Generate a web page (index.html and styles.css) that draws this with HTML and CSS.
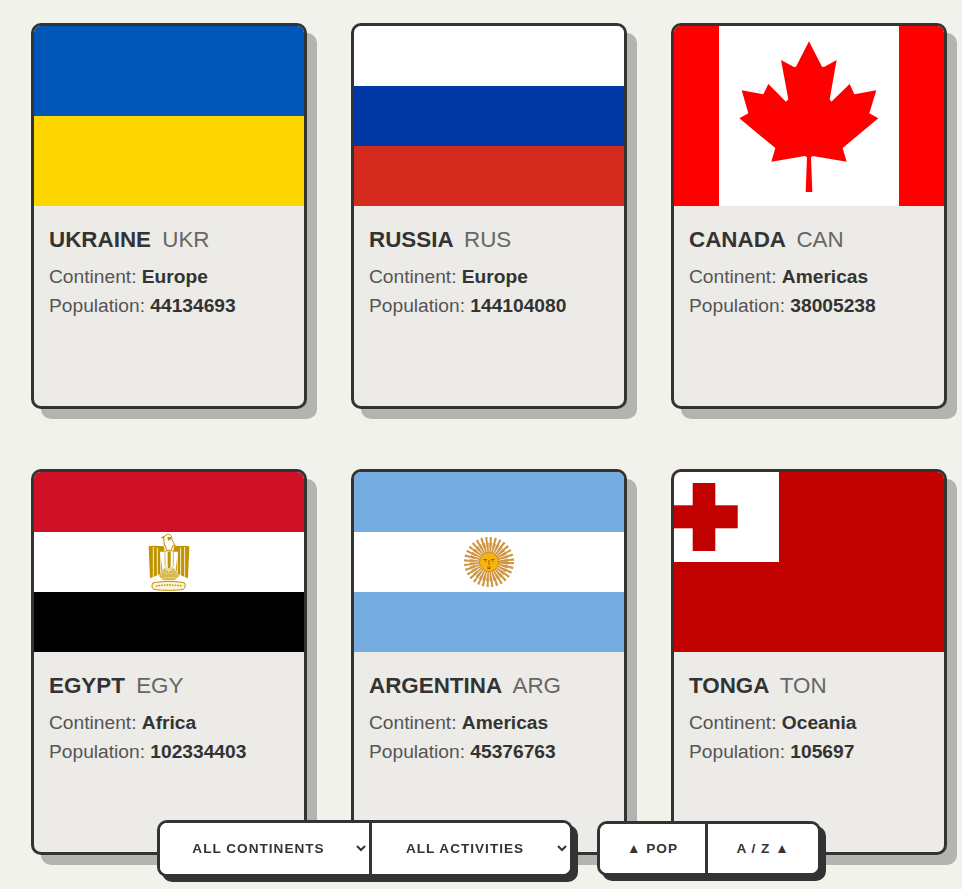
FILE: index.html
```html
<!DOCTYPE html>
<html lang="en">
<head>
<meta charset="utf-8">
<title>Countries</title>
<link rel="stylesheet" href="styles.css">
</head>
<body>
<main class="grid">
  <article class="card">
    <svg class="flag" viewBox="0 0 270 180"><rect width="270" height="90" fill="#0057b7"/><rect y="90" width="270" height="90" fill="#ffd700"/></svg>
    <div class="info">
      <h2 class="name">UKRAINE <span class="code">UKR</span></h2>
      <p class="row">Continent: <b>Europe</b></p>
      <p class="row">Population: <b>44134693</b></p>
    </div>
  </article>
  <article class="card">
    <svg class="flag" viewBox="0 0 270 180"><rect width="270" height="60" fill="#fff"/><rect y="60" width="270" height="60" fill="#0039a6"/><rect y="120" width="270" height="60" fill="#d52b1e"/></svg>
    <div class="info">
      <h2 class="name">RUSSIA <span class="code">RUS</span></h2>
      <p class="row">Continent: <b>Europe</b></p>
      <p class="row">Population: <b>144104080</b></p>
    </div>
  </article>
  <article class="card">
    <svg class="flag" viewBox="12 18 810 540"><rect x="12" y="18" width="810" height="540" fill="#f00"/><rect x="147" y="18" width="540" height="540" fill="#fff"/><polygon fill="#f00" points="417,64 456,140 462,141 500,120 479,238 484,245 539,192 553,223 619,211 598,280 625,295 518,384 530,425 428,408 423,412 427,516 407,516 411,412 405,408 304,425 316,384 208,295 235,280 215,211 280,223 295,192 348,245 355,238 333,120 372,141 378,140"/></svg>
    <div class="info">
      <h2 class="name">CANADA <span class="code">CAN</span></h2>
      <p class="row">Continent: <b>Americas</b></p>
      <p class="row">Population: <b>38005238</b></p>
    </div>
  </article>
  <article class="card">
    <svg class="flag" viewBox="0 0 810 540">
      <rect width="810" height="180" fill="#ce1126"/><rect y="180" width="810" height="180" fill="#fff"/><rect y="360" width="810" height="180" fill="#000"/>
      <g transform="translate(288 159)">
        <path fill="#fff" stroke="#c09300" stroke-width="3" d="M103 62L101 36L112 28C122 27 127 34 125 42L130 52L136 62L128 62L124 76H110L106 62Z"/>
        <path fill="#c09300" d="M102 32L92 38L102 41ZM112 36H124V42L114 48Z"/>
        <path fill="#c09300" d="M56 64L72 62L102 64L104 80L90 80L97 132L92 146L70 156L60 160Z"/>
        <path fill="#c09300" d="M178 64L162 62L132 64L130 80L144 80L137 132L142 146L164 156L174 160Z"/>
        <path stroke="#fff" stroke-width="2.500" fill="none" d="M70 66V158M82 68V152M92 82V146M164 66V158M152 68V152M142 82V146"/>
        <path fill="#fff" stroke="#c09300" stroke-width="2" d="M105 78H130V124L117 136L105 124Z"/>
        <path fill="#c09300" d="M113 80H122V126L117 132L113 126Z"/>
        <path fill="#d8b84a" d="M86 152L104 128L117 140L130 128L148 152L134 166H100Z"/>
        <path stroke="#fff" stroke-width="3" stroke-dasharray="3 5" fill="none" d="M94 150L110 134M140 150L124 134M100 158H134M108 146H126"/>
        <path fill="#fbf3d6" stroke="#c09300" stroke-width="3" d="M68 174C88 168 146 168 164 174C168 184 164 190 160 193C138 197 92 197 72 193C66 190 64 184 68 174Z"/>
        <path stroke="#c09300" stroke-width="4" stroke-dasharray="5 3" fill="none" d="M78 183C100 179 132 179 154 183"/>
      </g>
    </svg>
    <div class="info">
      <h2 class="name">EGYPT <span class="code">EGY</span></h2>
      <p class="row">Continent: <b>Africa</b></p>
      <p class="row">Population: <b>102334403</b></p>
    </div>
  </article>
  <article class="card">
    <svg class="flag" viewBox="0 0 270 180">
      <rect width="270" height="180" fill="#74acdf"/><rect y="60" width="270" height="60" fill="#fff"/>
      <circle cx="135" cy="90" r="14" fill="none" stroke="#cf9540" stroke-width="11" stroke-dasharray="2 .75"/>
      <circle cx="135" cy="90" r="20" fill="none" stroke="#cf9540" stroke-width="10" stroke-dasharray="1.9 2.03"/>
      <circle cx="135" cy="90" r="9.500" fill="#f6b40e" stroke="#c8841a" stroke-width=".8"/>
      <path fill="none" stroke="#85340a" stroke-width=".7" d="M129.500 87.500H133M137 87.500H140.500M130.500 89H132.500M137.500 89H139.500M135 88V93M133 95H137M133.500 96.500H136.500"/>
    </svg>
    <div class="info">
      <h2 class="name">ARGENTINA <span class="code">ARG</span></h2>
      <p class="row">Continent: <b>Americas</b></p>
      <p class="row">Population: <b>45376763</b></p>
    </div>
  </article>
  <article class="card">
    <svg class="flag" viewBox="0 0 270 180">
      <rect width="270" height="180" fill="#c10000"/><rect width="105" height="90" fill="#fff"/>
      <rect x="18.700" y="11" width="22.600" height="68" fill="#c10000"/><rect y="33.300" width="63.700" height="23" fill="#c10000"/>
    </svg>
    <div class="info">
      <h2 class="name">TONGA <span class="code">TON</span></h2>
      <p class="row">Continent: <b>Oceania</b></p>
      <p class="row">Population: <b>105697</b></p>
    </div>
  </article>
</main>
<nav class="controls">
  <div class="group">
    <select class="pick pick-continent"><option>ALL CONTINENTS</option></select>
    <select class="pick pick-activity"><option>ALL ACTIVITIES</option></select>
  </div>
  <div class="group">
    <button class="sort sort-pop" type="button">▲ POP</button>
    <button class="sort sort-az" type="button">A / Z ▲</button>
  </div>
</nav>
</body>
</html>
```
FILE: styles.css
```css
* { box-sizing: border-box; }
html, body { margin: 0; height: 100%; overflow: hidden; }
body {
  background: #f1f2eb;
  color: #333;
  font-family: "Liberation Sans", Arial, sans-serif;
}
.grid {
  display: grid;
  grid-template-columns: repeat(3, 276px);
  gap: 60px 44px;
  padding: 23px 0 0 31px;
}
.card {
  height: 386px;
  border: 3px solid #333;
  border-radius: 10px;
  background: #ecebe7;
  box-shadow: 10px 10px 0 #b4b4ae;
  overflow: hidden;
}
.flag { display: block; width: 270px; height: 180px; }
.info { padding: 20px 15px; }
.name {
  margin: 0 0 8px;
  font-size: 22.4px;
  line-height: 28px;
  font-weight: 700;
  white-space: nowrap;
}
.code {
  margin-left: 5px;
  font-weight: 400;
  color: #666;
}
.row {
  margin: 0;
  font-size: 19.2px;
  line-height: 29px;
  color: #555;
}
.row b { color: #333; }
.controls {
  position: fixed;
  left: 157px;
  top: 820px;
  display: flex;
  align-items: center;
  gap: 24px;
}
.group {
  display: flex;
  border: 3px solid #333;
  border-radius: 10px;
  background: #fff;
  box-shadow: 5px 5px 0 #333;
  overflow: hidden;
}
.pick, .sort {
  border: 0;
  background: #fff;
  color: #333;
  font-family: "Liberation Sans", Arial, sans-serif;
  font-size: 13.6px;
  font-weight: 700;
  letter-spacing: 1px;
  text-align: center;
  border-radius: 0;
}
.pick { height: 51px; }
.pick-continent { width: 212px; border-right: 3px solid #333; }
.pick-activity { width: 198px; }
.sort { height: 49px; }
.sort-pop { width: 108px; border-right: 3px solid #333; }
.sort-az { width: 110px; }
```
